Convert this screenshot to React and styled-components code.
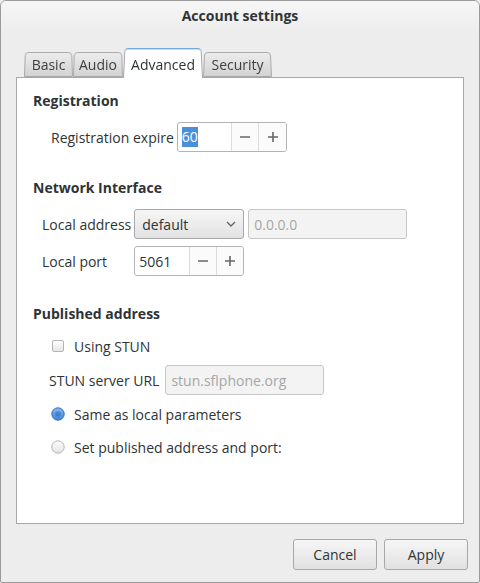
import React from "react";
import styled, {createGlobalStyle} from "styled-components";

const GlobalStyle = createGlobalStyle`
    html, body {
        margin: 0;
        padding: 0;
        background: #ededed;
    }
    body {
        font-family: "Open Sans", "DejaVu Sans", sans-serif;
        font-size: 14px;
        color: #2e3436;
    }
`;

const tabs = [
    {name: "Basic", width: 49},
    {name: "Audio", width: 50},
    {name: "Advanced", width: 80},
    {name: "Security", width: 69},
];

const Minus = () => (
    <svg width="12" height="12" viewBox="0 0 12 12">
        <path d="M1 6 H11" stroke="#666" strokeWidth="1.6"/>
    </svg>
);

const Plus = () => (
    <svg width="12" height="12" viewBox="0 0 12 12">
        <path d="M1 6 H11 M6 1 V11" stroke="#666" strokeWidth="1.6"/>
    </svg>
);

const App = () => {
    return (
        <>
            <GlobalStyle/>
            <Window>
                <TitleBar>Account settings</TitleBar>
                <Notebook>
                    <TabRow>
                        {tabs.map((tab) => (
                            <Tab key={tab.name} width={tab.width} active={tab.name === "Advanced"}>
                                <span>{tab.name}</span>
                            </Tab>
                        ))}
                    </TabRow>
                    <Panel>
                        <SectionTitle>Registration</SectionTitle>
                        <FormGrid indent={50}>
                            <Label>Registration expire</Label>
                            <SpinBox width={110} entry={53}>
                                <SpinEntry><Selected>60</Selected></SpinEntry>
                                <SpinButton><Minus/></SpinButton>
                                <SpinButton><Plus/></SpinButton>
                            </SpinBox>
                        </FormGrid>

                        <SectionTitle top={27}>Network Interface</SectionTitle>
                        <FormGrid indent={41} rowGap={7}>
                            <Label>Local address</Label>
                            <Inline>
                                <Combo>
                                    <span>default</span>
                                    <svg width="12" height="8" viewBox="0 0 12 8">
                                        <path d="M2 2 L6 6 L10 2" fill="none" stroke="#666" strokeWidth="1.4"/>
                                    </svg>
                                </Combo>
                                <DisabledEntry width={159}>0.0.0.0</DisabledEntry>
                            </Inline>
                            <Label>Local port</Label>
                            <SpinBox width={110} entry={54}>
                                <SpinEntry>5061</SpinEntry>
                                <SpinButton><Minus/></SpinButton>
                                <SpinButton><Plus/></SpinButton>
                            </SpinBox>
                        </FormGrid>

                        <SectionTitle top={29}>Published address</SectionTitle>
                        <OptionList>
                            <CheckRow>
                                <CheckBox/>
                                <span>Using STUN</span>
                            </CheckRow>
                            <UrlRow>
                                <Label>STUN server URL</Label>
                                <DisabledEntry width={159}>stun.sflphone.org</DisabledEntry>
                            </UrlRow>
                            <CheckRow>
                                <Radio checked/>
                                <span>Same as local parameters</span>
                            </CheckRow>
                            <CheckRow>
                                <Radio/>
                                <span>Set published address and port:</span>
                            </CheckRow>
                        </OptionList>
                    </Panel>
                </Notebook>
                <ButtonBar>
                    <Button>Cancel</Button>
                    <Button>Apply</Button>
                </ButtonBar>
            </Window>
        </>
    )
};

const Radio = ({checked}) => (
    <RadioIcon width="14" height="14" viewBox="0 0 14 14">
        <defs>
            <linearGradient id={checked ? "rOn" : "rOff"} x1="0" y1="0" x2="0" y2="1">
                <stop offset="0" stopColor={checked ? "#86b8f0" : "#ffffff"}/>
                <stop offset="1" stopColor={checked ? "#3d85d6" : "#e2e2e2"}/>
            </linearGradient>
        </defs>
        <circle cx="7" cy="7" r="6.2" fill={`url(#${checked ? "rOn" : "rOff"})`}
                stroke={checked ? "#2c6fc0" : "#b4b4b4"} strokeWidth="1"/>
        {checked && <circle cx="7" cy="7" r="2.8" fill="#2a64b0" opacity="0.5"/>}
    </RadioIcon>
);

const Window = styled.div`
    box-sizing: border-box;
    width: 480px;
    height: 583px;
    border: 1px solid #9a9a9a;
    border-radius: 6px 6px 2px 2px;
    background: #ededed;
    display: flex;
    flex-direction: column;
    overflow: hidden;
`;

const TitleBar = styled.div`
    height: 31px;
    line-height: 30px;
    text-align: center;
    font-weight: bold;
    color: #2e3436;
    background: linear-gradient(#f6f6f6, #ededed);
`;

const Notebook = styled.div`
    margin: 15px 15px 0 15px;
    display: flex;
    flex-direction: column;
`;

const TabRow = styled.div`
    display: flex;
    align-items: flex-end;
    padding-left: 8px;
    height: 30px;
    position: relative;
    z-index: 1;
`;

const Tab = styled.div`
    position: relative;
    box-sizing: border-box;
    width: ${p => p.width}px;
    height: ${p => p.active ? 31 : 26}px;
    margin-bottom: ${p => p.active ? -1 : 0}px;
    display: flex;
    align-items: center;
    justify-content: center;
    color: ${p => p.active ? "#2e3436" : "#3c3f41"};
    span {
        position: relative;
        margin-top: ${p => p.active ? 3 : 1}px;
    }
    &::before {
        content: "";
        position: absolute;
        inset: 0;
        border: 1px solid #a8a8a8;
        border-bottom: ${p => p.active ? "none" : "1px solid #a8a8a8"};
        border-top-color: ${p => p.active ? "#4a90d9" : "#a8a8a8"};
        border-radius: 4px 4px 0 0;
        background: ${p => p.active ? "#ffffff" : "linear-gradient(#ececec, #d3d3d3)"};
        transform: perspective(80px) rotateX(6deg);
        transform-origin: bottom;
    }
`;

const Panel = styled.div`
    box-sizing: border-box;
    height: 447px;
    background: #ffffff;
    border: 1px solid #a8a8a8;
    padding: 14px 16px 0 16px;
`;

const SectionTitle = styled.div`
    font-weight: bold;
    line-height: 18px;
    margin-top: ${p => p.top || 0}px;
`;

const FormGrid = styled.div`
    display: grid;
    grid-template-columns: auto auto;
    justify-content: start;
    align-items: center;
    column-gap: 3px;
    row-gap: ${p => p.rowGap || 0}px;
    margin-top: 12px;
    padding-left: ${p => p.indent - 32}px;
`;

const Label = styled.span`
    white-space: nowrap;
`;

const Inline = styled.div`
    display: flex;
    gap: 4px;
`;

const SpinBox = styled.div`
    box-sizing: border-box;
    width: ${p => p.width}px;
    height: 30px;
    border: 1px solid #b3b3b3;
    border-radius: 3px;
    display: grid;
    grid-template-columns: ${p => p.entry}px 1fr 1fr;
    overflow: hidden;
    background: #ffffff;
`;

const SpinEntry = styled.div`
    display: flex;
    align-items: center;
    padding-left: 4px;
`;

const Selected = styled.span`
    background: #4a90d9;
    color: #ffffff;
    line-height: 20px;
`;

const SpinButton = styled.div`
    display: flex;
    align-items: center;
    justify-content: center;
    border-left: 1px solid #dcdcdc;
    background: #fbfbfb;
`;

const Combo = styled.div`
    box-sizing: border-box;
    width: 110px;
    height: 30px;
    border: 1px solid #a8a8a8;
    border-radius: 3px;
    background: linear-gradient(#f6f6f6, #e2e2e2);
    display: flex;
    align-items: center;
    justify-content: space-between;
    padding: 0 6px 0 7px;
`;

const DisabledEntry = styled.div`
    box-sizing: border-box;
    width: ${p => p.width}px;
    height: 30px;
    border: 1px solid #c6c6c6;
    border-radius: 3px;
    background: #f3f3f3;
    color: #a5a7a5;
    display: flex;
    align-items: center;
    padding-left: 5px;
`;

const OptionList = styled.div`
    display: flex;
    flex-direction: column;
    gap: 5px;
    margin-top: 9px;
`;

const CheckRow = styled.div`
    display: flex;
    align-items: center;
    height: 28px;
    padding-left: 18px;
    gap: 9px;
`;

const UrlRow = styled.div`
    display: flex;
    align-items: center;
    gap: 6px;
    padding-left: 16px;
`;

const CheckBox = styled.span`
    box-sizing: border-box;
    width: 12px;
    height: 12px;
    margin: 0 1px;
    border: 1px solid #b4b4b4;
    border-radius: 2px;
    background: linear-gradient(#ffffff, #e6e6e6);
`;

const RadioIcon = styled.svg`
    flex: none;
`;

const ButtonBar = styled.div`
    display: flex;
    justify-content: flex-end;
    gap: 7px;
    padding: 15px 11px 0 0;
`;

const Button = styled.div`
    box-sizing: border-box;
    width: 84px;
    height: 31px;
    border: 1px solid #a8a8a8;
    border-radius: 3px;
    background: linear-gradient(#f6f6f6, #e1e1e1);
    display: flex;
    align-items: center;
    justify-content: center;
    color: #2e3436;
`;

export default App
